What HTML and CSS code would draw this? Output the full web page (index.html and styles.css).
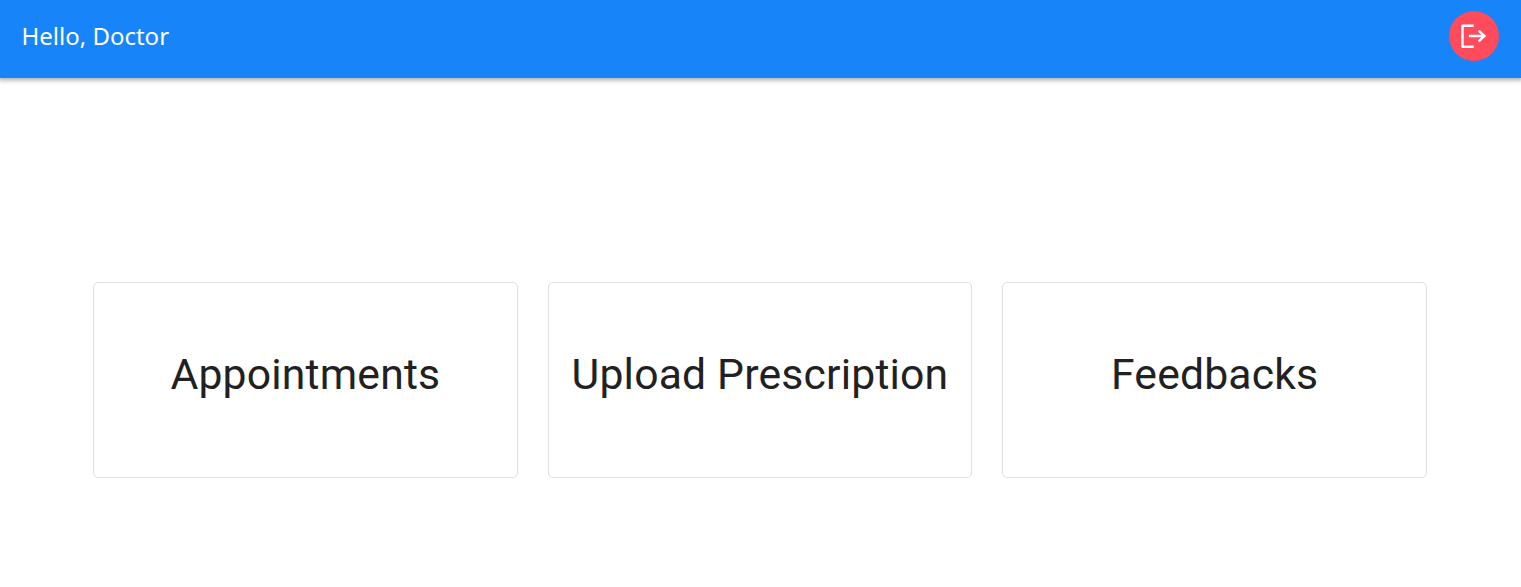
FILE: index.html
```html
<!DOCTYPE html>
<html lang="en">
<head>
<meta charset="utf-8">
<title>Doctor Dashboard</title>
<link rel="stylesheet" href="styles.css">
</head>
<body>
<header class="toolbar">
  <span class="greeting">Hello, Doctor</span>
  <button class="logout" aria-label="Log out">
    <svg viewBox="0 0 30 30" width="30" height="30" fill="none" stroke="#fff" stroke-width="2.4"><path stroke-linejoin="round" d="M14.700 4.800H3.500v20.900H14.700"/><path d="M9.800 15H25M19.700 9.700 25.400 15l-5.700 5.300"/></svg>
  </button>
</header>
<main class="cards">
  <a class="card">Appointments</a>
  <a class="card">Upload Prescription</a>
  <a class="card">Feedbacks</a>
</main>
</body>
</html>
```
FILE: styles.css
```css
* { box-sizing: border-box; }
body { margin: 0; background: #fff; overflow: hidden; }
.toolbar {
  display: flex;
  justify-content: space-between;
  height: 78px;
  padding: 11px 22px 0 21.5px;
  background: #1884f9;
  box-shadow: 0 0 5px 2px rgba(0, 0, 0, .35);
}
.greeting {
  color: #fff;
  font: 24px/50px "Noto Sans", sans-serif;
}
.logout {
  display: flex;
  align-items: center;
  justify-content: center;
  width: 50px;
  height: 50px;
  padding: 0;
  border: 0;
  border-radius: 50%;
  background: #ff4b5c;
}
.cards {
  display: grid;
  grid-template-columns: repeat(3, 1fr);
  gap: 30px;
  padding: 204px 94px 0 93px;
}
.card {
  display: flex;
  align-items: center;
  justify-content: center;
  height: 196px;
  padding-bottom: 12px;
  border: 1px solid #e0e0e0;
  border-radius: 5px;
  color: #212121;
  font: 42.7px/56px Roboto, sans-serif;
  letter-spacing: .18px;
  white-space: nowrap;
}
```
